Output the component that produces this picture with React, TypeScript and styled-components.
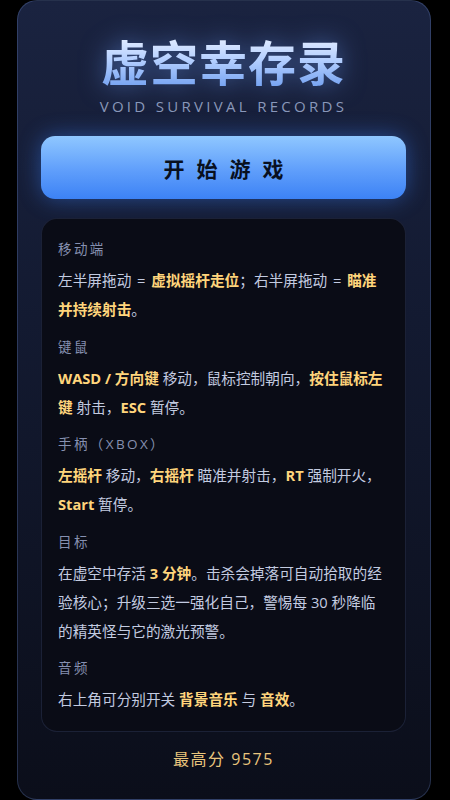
import React from "react"
import styled, { createGlobalStyle } from "styled-components"

const GlobalStyle = createGlobalStyle`
    html, body {
        margin: 0;
        padding: 0;
        background: #000;
    }
    body {
        font-family: "Open Sans", "Noto Sans CJK SC", sans-serif;
    }
`

const Panel = styled.div`
    box-sizing: border-box;
    width: 414px;
    margin: 0 0 0 17px;
    padding: 29px 24px 29px 23px;
    display: flex;
    flex-direction: column;
    align-items: stretch;
    border: 1px solid rgba(110, 140, 210, 0.28);
    border-radius: 20px;
    background: linear-gradient(180deg, #1a2340 0%, #131a31 40%, #0b0e1a 100%);
`
const Title = styled.h1`
    margin: 0;
    text-align: center;
    font-family: "Noto Sans CJK SC", sans-serif;
    font-size: 48px;
    line-height: 60px;
    font-weight: 700;
    letter-spacing: 1px;
    background: linear-gradient(180deg, #f2f6ff 0%, #b4cfff 50%, #6f9ef0 100%);
    -webkit-background-clip: text;
    background-clip: text;
    color: transparent;
    filter: drop-shadow(0 0 12px rgba(110, 160, 255, 0.5));
`
const Subtitle = styled.div`
    margin-top: 6px;
    text-align: center;
    font-size: 15px;
    line-height: 20px;
    letter-spacing: 3.3px;
    color: #8a98b9;
`
const StartButton = styled.button`
    margin-top: 20px;
    height: 63px;
    border: 0;
    border-radius: 14px;
    background: linear-gradient(180deg, #8fc7ff 0%, #5f9efb 55%, #3c82f5 100%);
    box-shadow: 0 0 22px rgba(60, 130, 255, 0.45);
    font-family: "Noto Sans CJK SC", sans-serif;
    font-size: 21px;
    font-weight: 700;
    letter-spacing: 12px;
    text-indent: 12px;
    color: #08101f;
    cursor: pointer;
`
const HelpCard = styled.div`
    margin-top: 19px;
    padding: 20px 17px 17px 16px;
    display: flex;
    flex-direction: column;
    gap: 12.5px;
    border: 1px solid rgba(90, 110, 170, 0.22);
    border-radius: 16px;
    background: #0a0c16;
`
const Section = styled.div`
    display: flex;
    flex-direction: column;
    gap: 7px;
`
const SectionTitle = styled.div`
    font-size: 13.5px;
    line-height: 20px;
    letter-spacing: 2.4px;
    color: #8690b0;
`
const SectionText = styled.p`
    margin: 0;
    font-size: 14.67px;
    line-height: 29px;
    color: #c3cbe0;
`
const Eq = styled.span`
    margin: 0 2px;
`
const Hl = styled.b`
    font-weight: 700;
    color: #ffd57c;
`
const BestScore = styled.div`
    margin-top: 16px;
    text-align: center;
    font-size: 16px;
    line-height: 22px;
    letter-spacing: 1.5px;
    color: #e9c57d;
`

const sections = [
    {
        title: "移动端",
        body: (
            <>
                左半屏拖动 <Eq>=</Eq> <Hl>虚拟摇杆走位</Hl>；右半屏拖动 <Eq>=</Eq> <Hl>瞄准并持续射击</Hl>。
            </>
        ),
    },
    {
        title: "键鼠",
        body: (
            <>
                <Hl>WASD / 方向键</Hl> 移动，鼠标控制朝向，<Hl>按住鼠标左键</Hl> 射击，<Hl>ESC</Hl> 暂停。
            </>
        ),
    },
    {
        title: "手柄（XBOX）",
        body: (
            <>
                <Hl>左摇杆</Hl> 移动，<Hl>右摇杆</Hl> 瞄准并射击，<Hl>RT</Hl> 强制开火，<Hl>Start</Hl> 暂停。
            </>
        ),
    },
    {
        title: "目标",
        body: (
            <>
                在虚空中存活 <Hl>3 分钟</Hl>。击杀会掉落可自动拾取的经验核心；升级三选一强化自己，警惕每 30 秒降临的精英怪与它的激光预警。
            </>
        ),
    },
    {
        title: "音频",
        body: (
            <>
                右上角可分别开关 <Hl>背景音乐</Hl> 与 <Hl>音效</Hl>。
            </>
        ),
    },
]

const App = () => {
    return (
        <>
            <GlobalStyle />
            <Panel>
                <Title>虚空幸存录</Title>
                <Subtitle>VOID SURVIVAL RECORDS</Subtitle>
                <StartButton>开始游戏</StartButton>
                <HelpCard>
                    {sections.map((s) => (
                        <Section key={s.title}>
                            <SectionTitle>{s.title}</SectionTitle>
                            <SectionText>{s.body}</SectionText>
                        </Section>
                    ))}
                </HelpCard>
                <BestScore>最高分 9575</BestScore>
            </Panel>
        </>
    )
}

export default App
